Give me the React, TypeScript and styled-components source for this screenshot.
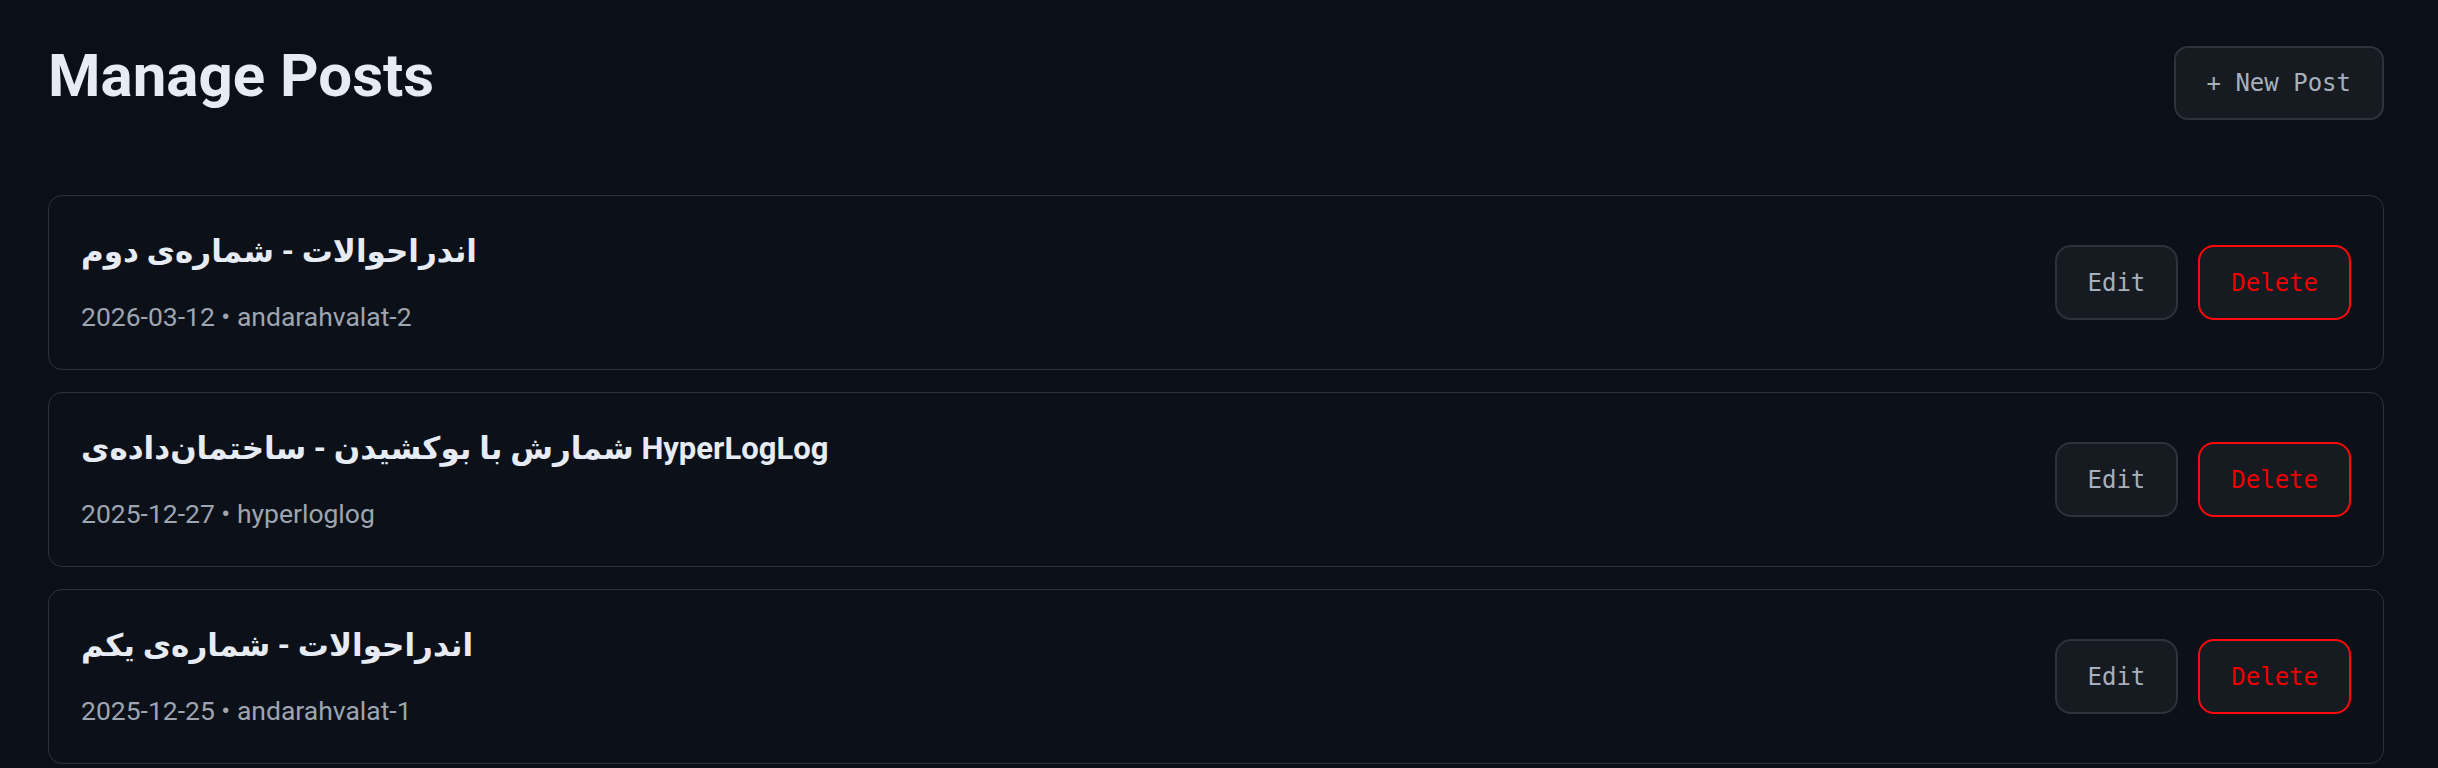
import styled, { createGlobalStyle } from "styled-components";

interface Post {
  title: string;
  date: string;
  slug: string;
}

const posts: Post[] = [
  { title: "اندراحوالات - شماره‌ی دوم", date: "2026-03-12", slug: "andarahvalat-2" },
  {
    title: "شمارش با بوکشیدن - ساختمان‌داده‌ی HyperLogLog",
    date: "2025-12-27",
    slug: "hyperloglog",
  },
  { title: "اندراحوالات - شماره‌ی یکم", date: "2025-12-25", slug: "andarahvalat-1" },
];

const GlobalStyle = createGlobalStyle`
  html, body {
    margin: 0;
    background: #0b0f17;
  }
  * {
    box-sizing: border-box;
  }
`;

const Page = styled.main`
  min-height: 100vh;
  padding: 40px 54px 0 48px;
  background: #0b0f17;
`;

const Header = styled.header`
  display: flex;
  justify-content: space-between;
  align-items: flex-start;
  margin-bottom: 75px;
`;

const Heading = styled.h1`
  margin: 0;
  font-family: Roboto, "DejaVu Sans", sans-serif;
  font-weight: 700;
  font-size: 60px;
  line-height: 72px;
  color: #e6ebf4;
`;

const mono = `"DejaVu Sans Mono", "Liberation Mono", monospace`;

const NewPostButton = styled.button`
  margin-top: 6px;
  height: 74px;
  padding: 0 31px;
  border: 2px solid #2e323a;
  border-radius: 14px;
  background: #161a21;
  color: #a9b0bb;
  font-family: ${mono};
  font-size: 24px;
  cursor: pointer;
`;

const PostList = styled.div`
  display: flex;
  flex-direction: column;
  gap: 22px;
`;

const Card = styled.div`
  display: flex;
  justify-content: space-between;
  align-items: center;
  padding: 32px;
  border: 1.5px solid #2e323a;
  border-radius: 14px;
  background: #0c1018;
`;

const Info = styled.div`
  display: flex;
  flex-direction: column;
  gap: 21px;
`;

const PostTitle = styled.div`
  font-family: Roboto, "DejaVu Sans", sans-serif;
  font-weight: 700;
  font-size: 31px;
  line-height: 48px;
  color: #e6ebf4;
`;

const Meta = styled.div`
  font-family: Roboto, sans-serif;
  font-size: 26.5px;
  line-height: 40px;
  color: #9ea5b0;
`;

const Actions = styled.div`
  display: flex;
  gap: 20px;
`;

const ActionButton = styled.button<{ $danger?: boolean }>`
  height: 75px;
  padding: 0 31px;
  border: 2px solid ${(p) => (p.$danger ? "#ff0a0a" : "#2e323a")};
  border-radius: 16px;
  background: #161a21;
  color: ${(p) => (p.$danger ? "#ee0000" : "#a9b0bb")};
  font-family: ${mono};
  font-size: 24px;
  cursor: pointer;
`;

const App = () => {
  return (
    <Page>
      <GlobalStyle />
      <Header>
        <Heading>Manage Posts</Heading>
        <NewPostButton>+ New Post</NewPostButton>
      </Header>
      <PostList>
        {posts.map((post) => (
          <Card key={post.slug}>
            <Info>
              <PostTitle>{post.title}</PostTitle>
              <Meta>
                {post.date} • {post.slug}
              </Meta>
            </Info>
            <Actions>
              <ActionButton>Edit</ActionButton>
              <ActionButton $danger>Delete</ActionButton>
            </Actions>
          </Card>
        ))}
      </PostList>
    </Page>
  );
};

export default App;
